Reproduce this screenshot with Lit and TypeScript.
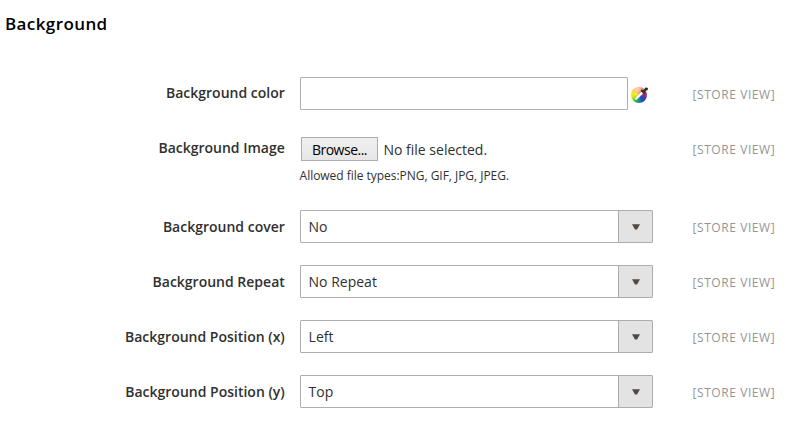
import { LitElement, html, css } from "lit";
import { customElement, property } from "lit/decorators.js";

@customElement("color-wheel-icon")
class ColorWheelIcon extends LitElement {
  static styles = css`
    :host { display: block; width: 18px; height: 17px; }
    .wheel {
      width: 16px; height: 16px; margin-top: .5px; border-radius: 50%;
      background:
        radial-gradient(circle at 42% 14%, rgba(255,255,255,.65), rgba(255,255,255,0) 42%),
        conic-gradient(#ff7b45, #ee4440 65deg, #7a2ba5 100deg, #1747bc 140deg, #1290a0 180deg, #25bb2b 210deg, #a8e808 240deg, #fff000 280deg, #ffa834 325deg, #ff7b45);
    }
    .icon { display: grid; }
    .icon > * { grid-area: 1 / 1; }
    svg { width: 18px; height: 17px; }
  `;
  render() {
    return html`<div class="icon"><div class="wheel"></div>
      <svg viewBox="0 0 18 17">
        <path d="M5 13 11.8 6.2" stroke="#888" stroke-width="3" stroke-linecap="round"/>
        <path d="M4.9 12.7 11.2 6.5" stroke="#fff" stroke-width="2.2" stroke-linecap="round"/>
        <path d="M10.9 4.7 13.5 7.3M12.6 5.6 15.2 3" stroke="#303030" stroke-width="2.2" stroke-linecap="round"/>
        <path d="M14.1 2h2.3v1.9h-2.1z" fill="#292929" stroke="#292929" stroke-width=".7"/>
      </svg></div>`;
  }
}

@customElement("select-box")
class SelectBox extends LitElement {
  @property() value = "";
  static styles = css`
    :host { display: block; }
    .box {
      box-sizing: border-box; width: 353px; height: 33px; display: flex;
      border: 1px solid #adadad; border-radius: 1px; background: #fff;
    }
    .value { flex: 1; padding-left: 7.6px; line-height: 31px; }
    .arrow {
      width: 33px; border-left: 1px solid #adadad; background: #e3e3e3;
      display: flex; align-items: center; justify-content: center;
    }
    svg { display: block; width: 8px; height: 6px; margin: 1px 0 0 1px; }
  `;
  render() {
    return html`<div class="box"><span class="value">${this.value}</span>
      <span class="arrow"><svg viewBox="0 0 8 6"><path d="M0 .2h8L5 5.4H3z" fill="#514943"/></svg></span></div>`;
  }
}

@customElement("form-row")
class FormRow extends LitElement {
  @property() label = "";
  static styles = css`
    :host { display: block; }
    .row { display: grid; grid-template-columns: 284.8px 377px 1fr; column-gap: 15.2px; height: 33px; }
    .label { text-align: right; font-weight: 600; line-height: var(--label-line, 32px); white-space: nowrap; }
    .scope { font-size: 12px; line-height: 35px; color: #959595; letter-spacing: .58px; padding-left: .3px; white-space: nowrap; }
  `;
  render() {
    return html`<div class="row"><div class="label">${this.label}</div>
      <div><slot></slot></div><div class="scope">[STORE VIEW]</div></div>`;
  }
}

@customElement("app-root")
class AppRoot extends LitElement {
  static styles = css`
    :host {
      display: block; height: 426px; overflow: hidden; background: #fff;
      font: 14px/20px "Open Sans", "Noto Sans", sans-serif; color: #303030;
    }
    h2 { margin: 0; padding: 12px 0 0 5px; height: 65px; box-sizing: content-box; font-size: 17px; line-height: 24px; font-weight: 600; letter-spacing: .4px; color: #000; }
    .rows { display: flex; flex-direction: column; gap: 22px; }
    .file-row { height: 56px; }
    .select-row { --label-line: 34px; }
    .color { display: flex; }
    .field { box-sizing: border-box; width: 328px; height: 33px; border: 1px solid #adadad; border-radius: 1px; margin-right: 3px; }
    .picker { margin-top: 9px; }
    .file { display: flex; align-items: center; height: 24px; padding: 5px 0 0 1px; gap: 5.5px; white-space: nowrap; }
    .file-name { line-height: 22px; padding-top: 2px; }
    .browse { box-sizing: border-box; width: 77px; height: 24px; border: 1px solid #adadad; background: linear-gradient(#f0f0f0, #e6e6e6); color: #000; text-align: center; line-height: 23px; letter-spacing: -.5px; }
    .note { font-size: 12px; line-height: 18px; margin: 6px 0 0 -.4px; letter-spacing: -.03px; white-space: nowrap; }
  `;
  private selects = [
    ["Background cover", "No"],
    ["Background Repeat", "No Repeat"],
    ["Background Position (x)", "Left"],
    ["Background Position (y)", "Top"],
  ];
  render() {
    return html`<h2>Background</h2>
      <div class="rows">
        <form-row label="Background color"><div class="color"><div class="field"></div><color-wheel-icon class="picker"></color-wheel-icon></div></form-row>
        <form-row class="file-row" label="Background Image">
          <div class="file"><span class="browse">Browse...</span><span class="file-name">No file selected.</span></div>
          <div class="note">Allowed file types:PNG, GIF, JPG, JPEG.</div>
        </form-row>
        ${this.selects.map(([label, value]) => html`<form-row class="select-row" label=${label}><select-box value=${value}></select-box></form-row>`)}
      </div>`;
  }
}
